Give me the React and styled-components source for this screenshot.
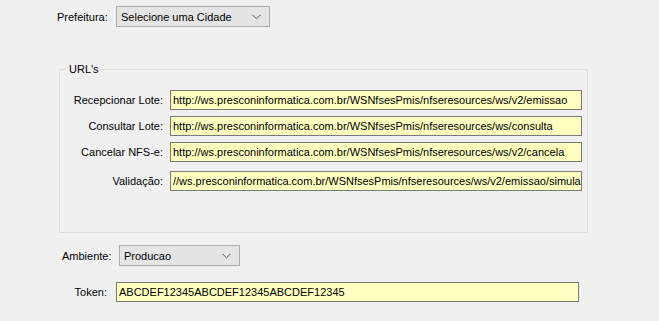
import styled, { createGlobalStyle } from 'styled-components';

const Global = createGlobalStyle`
    body {
        margin: 0;
        background: #f0f0f0;
        font-family: "Liberation Sans", Arial, sans-serif;
        font-size: 11px;
        color: #000;
    }
`;

const Page = styled.div`
    display: flex;
    flex-direction: column;
    width: 659px;
    height: 321px;
    overflow: hidden;
`;

const Row = styled.div`
    display: flex;
    align-items: center;
    margin-left: ${p => p.$left || 0}px;
    margin-top: ${p => p.$top || 0}px;
    height: ${p => p.$h || 21}px;
`;

const Label = styled.span`
    width: ${p => p.$w}px;
    text-align: ${p => p.$align || 'left'};
    padding-right: ${p => p.$pad || 0}px;
    box-sizing: border-box;
    white-space: nowrap;
`;

const Combo = styled.div`
    display: flex;
    align-items: center;
    justify-content: space-between;
    width: ${p => p.$w}px;
    height: 21px;
    box-sizing: border-box;
    border: 1px solid #adadad;
    background: #e5e5e5;
    padding: 0 8px 0 4px;
`;

const TextBox = styled.div`
    width: ${p => p.$w}px;
    height: ${p => p.$h || 20}px;
    box-sizing: border-box;
    border: 1px solid #7a7a7a;
    background: #ffffc0;
    padding: 0 2px;
    display: flex;
    align-items: center;
    white-space: nowrap;
    overflow: hidden;
`;

const Group = styled.fieldset`
    margin: 35px 0 0 59px;
    padding: 0;
    width: 529px;
    height: 171px;
    box-sizing: border-box;
    border: 1px solid #dcdcdc;
    display: flex;
    flex-direction: column;

    legend {
        margin-left: 6px;
        padding: 0 3px;
        line-height: 14px;
    }
`;

const Chevron = () => (
    <svg width="9" height="6" viewBox="0 0 9 6">
        <path d="M0.5 0.8 L4.5 4.8 L8.5 0.8" fill="none" stroke="#555" strokeWidth="1" />
    </svg>
);

const urls = [
    ['Recepcionar Lote:', 'http://ws.presconinformatica.com.br/WSNfsesPmis/nfseresources/ws/v2/emissao', 14],
    ['Consultar Lote:', 'http://ws.presconinformatica.com.br/WSNfsesPmis/nfseresources/ws/consulta', 6],
    ['Cancelar NFS-e:', 'http://ws.presconinformatica.com.br/WSNfsesPmis/nfseresources/ws/v2/cancela', 6],
    ['Validação:', '//ws.presconinformatica.com.br/WSNfsesPmis/nfseresources/ws/v2/emissao/simula', 9],
];

export default function App() {
    return (
        <Page>
            <Global />
            <Row $left={57} $top={6}>
                <Label $w={59}>Prefeitura:</Label>
                <Combo $w={154}>
                    <span>Selecione uma Cidade</span>
                    <Chevron />
                </Combo>
            </Row>

            <Group>
                <legend>URL's</legend>
                {urls.map(([label, url, top]) => (
                    <Row key={label} $top={top} $h={20}>
                        <Label $w={110} $align="right" $pad={7}>{label}</Label>
                        <TextBox $w={412}>{url}</TextBox>
                    </Row>
                ))}
            </Group>

            <Row $left={62} $top={12}>
                <Label $w={57}>Ambiente:</Label>
                <Combo $w={121}>
                    <span>Producao</span>
                    <Chevron />
                </Combo>
            </Row>

            <Row $left={62} $top={16} $h={20}>
                <Label $w={54} $align="right" $pad={9}>Token:</Label>
                <TextBox $w={463}>ABCDEF12345ABCDEF12345ABCDEF12345</TextBox>
            </Row>
        </Page>
    );
}
